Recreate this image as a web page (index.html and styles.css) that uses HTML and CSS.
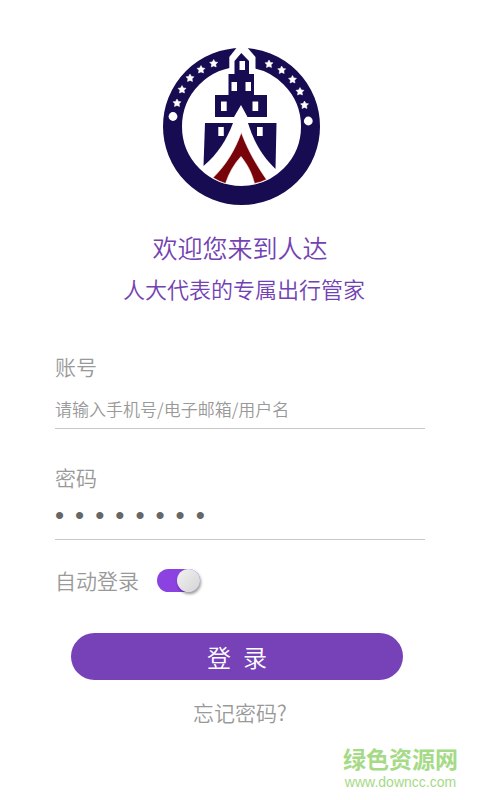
FILE: index.html
```html
<!DOCTYPE html>
<html lang="zh-CN">
<head>
<meta charset="utf-8">
<meta name="viewport" content="width=device-width, initial-scale=1">
<title>登录</title>
<link rel="stylesheet" href="styles.css">
</head>
<body>
<main class="page">
  <header class="intro">
    <svg class="logo" viewBox="161 40 159 166" aria-hidden="true">
      <defs>
        <path id="star" d="M0-4 1.4-1.6 4-1.2 2.1.8 2.5 3.5 0 2.4-2.5 3.5-2.1.8-4-1.2-1.4-1.6Z" stroke="#fff" stroke-width=".5"/>
      </defs>
      <circle cx="241.500" cy="126.500" r="69" fill="none" stroke="#170c52" stroke-width="19"/>
      <path fill="#fff" d="M238 46 229.300 57V72H255.500V57L246 46Z"/>
      <g fill="#170c52">
        <path d="M241.300 53 249 61V74H254V95H267V117H247.500L241 105 234 117H215V95H228.500V74H234.500V61Z"/>
        <path d="M205 123H233C227 139 218 154 203.500 166Z"/>
        <path d="M248 123H276.500L275.500 169C262 156 254 142 248 123Z"/>
      </g>
      <g fill="#fff">
        <path d="M239.500 61h5.500v9h-5.500zM231.500 82h5.500v9h-5.500zM245.500 82h5.500v9h-5.500zM221 101.500h5.700v9.500h-5.700zM252.500 101.500h5.700v9.500h-5.700zM218.300 127h5.500v9h-5.500zM257 127h5.700v9h-5.700z"/>
        <circle cx="173" cy="116.500" r="4.400"/>
        <circle cx="308.300" cy="121" r="4.400"/>
        <use href="#star" x="177" y="103"/>
        <use href="#star" x="182" y="89.500"/>
        <use href="#star" x="190" y="78"/>
        <use href="#star" x="201" y="69.500"/>
        <use href="#star" x="213.700" y="63.500"/>
        <use href="#star" x="269" y="64"/>
        <use href="#star" x="281.700" y="70"/>
        <use href="#star" x="292.500" y="79.500"/>
        <use href="#star" x="300" y="91.500"/>
        <use href="#star" x="304.500" y="105"/>
      </g>
      <path fill="#780409" stroke="#fff" stroke-width=".6" d="M241.300 132.500C247 148 255 163 266.500 179.500Q261 182.500 254.500 183.500C252 173 247 164 241 156.500 234 164 229 173 225.500 183.500Q219 181.500 213 177.700C226 165 235 150 241.300 132.500Z"/>
    </svg>
    <h1 class="title">欢迎您来到人达</h1>
    <p class="subtitle">人大代表的专属出行管家</p>
  </header>

  <form class="form">
    <div class="field">
      <label class="label" for="account">账号</label>
      <input class="input" id="account" type="text" placeholder="请输入手机号/电子邮箱/用户名">
    </div>
    <div class="field">
      <label class="label" for="password">密码</label>
      <input class="input password" id="password" type="password" value="12345678">
    </div>
    <div class="auto">
      <label class="label" for="auto">自动登录</label>
      <input class="switch" id="auto" type="checkbox" role="switch" checked>
    </div>
    <button class="submit" type="submit">登&ensp;录</button>
    <a class="forgot" href="#">忘记密码?</a>
  </form>

  <footer class="source">
    <strong class="source-name">绿色资源网</strong>
    <span class="source-url">www.downcc.com</span>
  </footer>
</main>
</body>
</html>
```
FILE: styles.css
```css
* {
  box-sizing: border-box;
}

body {
  margin: 0;
  background: #fff;
  color: #999;
  font-family: "Noto Sans CJK SC", sans-serif;
  font-weight: 350;
}

.page {
  display: flex;
  flex-direction: column;
  padding: 40px 24px 8px;
}

.intro {
  display: flex;
  flex-direction: column;
  align-items: center;
  color: #7342b2;
  text-align: center;
}

.logo {
  display: block;
  width: 159px;
  height: 166px;
}

.title {
  margin: 24px 0 0;
  font-size: 25px;
  font-weight: 350;
  line-height: 34px;
}

.subtitle {
  margin: 8px 0 0;
  padding-left: 8px;
  font-size: 22px;
  line-height: 32px;
}

.form {
  display: flex;
  flex-direction: column;
  padding: 48px 31px 0;
}

.field {
  display: flex;
  flex-direction: column;
  margin-bottom: 34px;
}

.label {
  font-size: 21px;
  line-height: 28px;
}

.input {
  width: 100%;
  height: 49px;
  padding: 9px 0 0;
  border: 0;
  border-bottom: 1px solid #c8c8c8;
  outline: 0;
  background: none;
  color: #666;
  font-family: inherit;
  font-size: 17px;
  font-weight: 350;
}

.input::placeholder {
  color: #999;
  opacity: 1;
}

.password {
  padding: 0;
  font-family: "Liberation Sans", sans-serif;
  font-size: 26px;
  letter-spacing: 11px;
}

.auto {
  display: flex;
  align-items: center;
  gap: 18px;
  margin-top: -8px;
}

.switch {
  width: 43px;
  height: 23px;
  margin: 0;
  border-radius: 12px;
  appearance: none;
  background: #ccc;
}

.switch::before {
  content: "";
  display: block;
  width: 23px;
  height: 23px;
  border-radius: 50%;
  background: linear-gradient(135deg, #f2f2f2, #d4d4d4);
  box-shadow: 1px 2px 3px rgba(0, 0, 0, 0.4);
}

.switch:checked {
  background: #8b42e0;
}

.switch:checked::before {
  margin-left: 20px;
}

.submit {
  height: 47px;
  margin: 39px 22px 0 16px;
  padding: 0;
  border: 0;
  border-radius: 24px;
  background: #7742b7;
  color: #fff;
  font-family: inherit;
  font-size: 24px;
  font-weight: 350;
}

.forgot {
  align-self: center;
  margin-top: 18px;
  color: #999;
  font-size: 21px;
  line-height: 28px;
  text-decoration: none;
}

.source {
  display: flex;
  flex-direction: column;
  align-self: flex-end;
  align-items: center;
  margin: 16px -2px 0 0;
  color: #a5da86;
}

.source-name {
  font-size: 23px;
  font-weight: 700;
  line-height: 32px;
}

.source-url {
  font-family: "Liberation Sans", sans-serif;
  font-size: 14px;
  line-height: 16px;
}
```
